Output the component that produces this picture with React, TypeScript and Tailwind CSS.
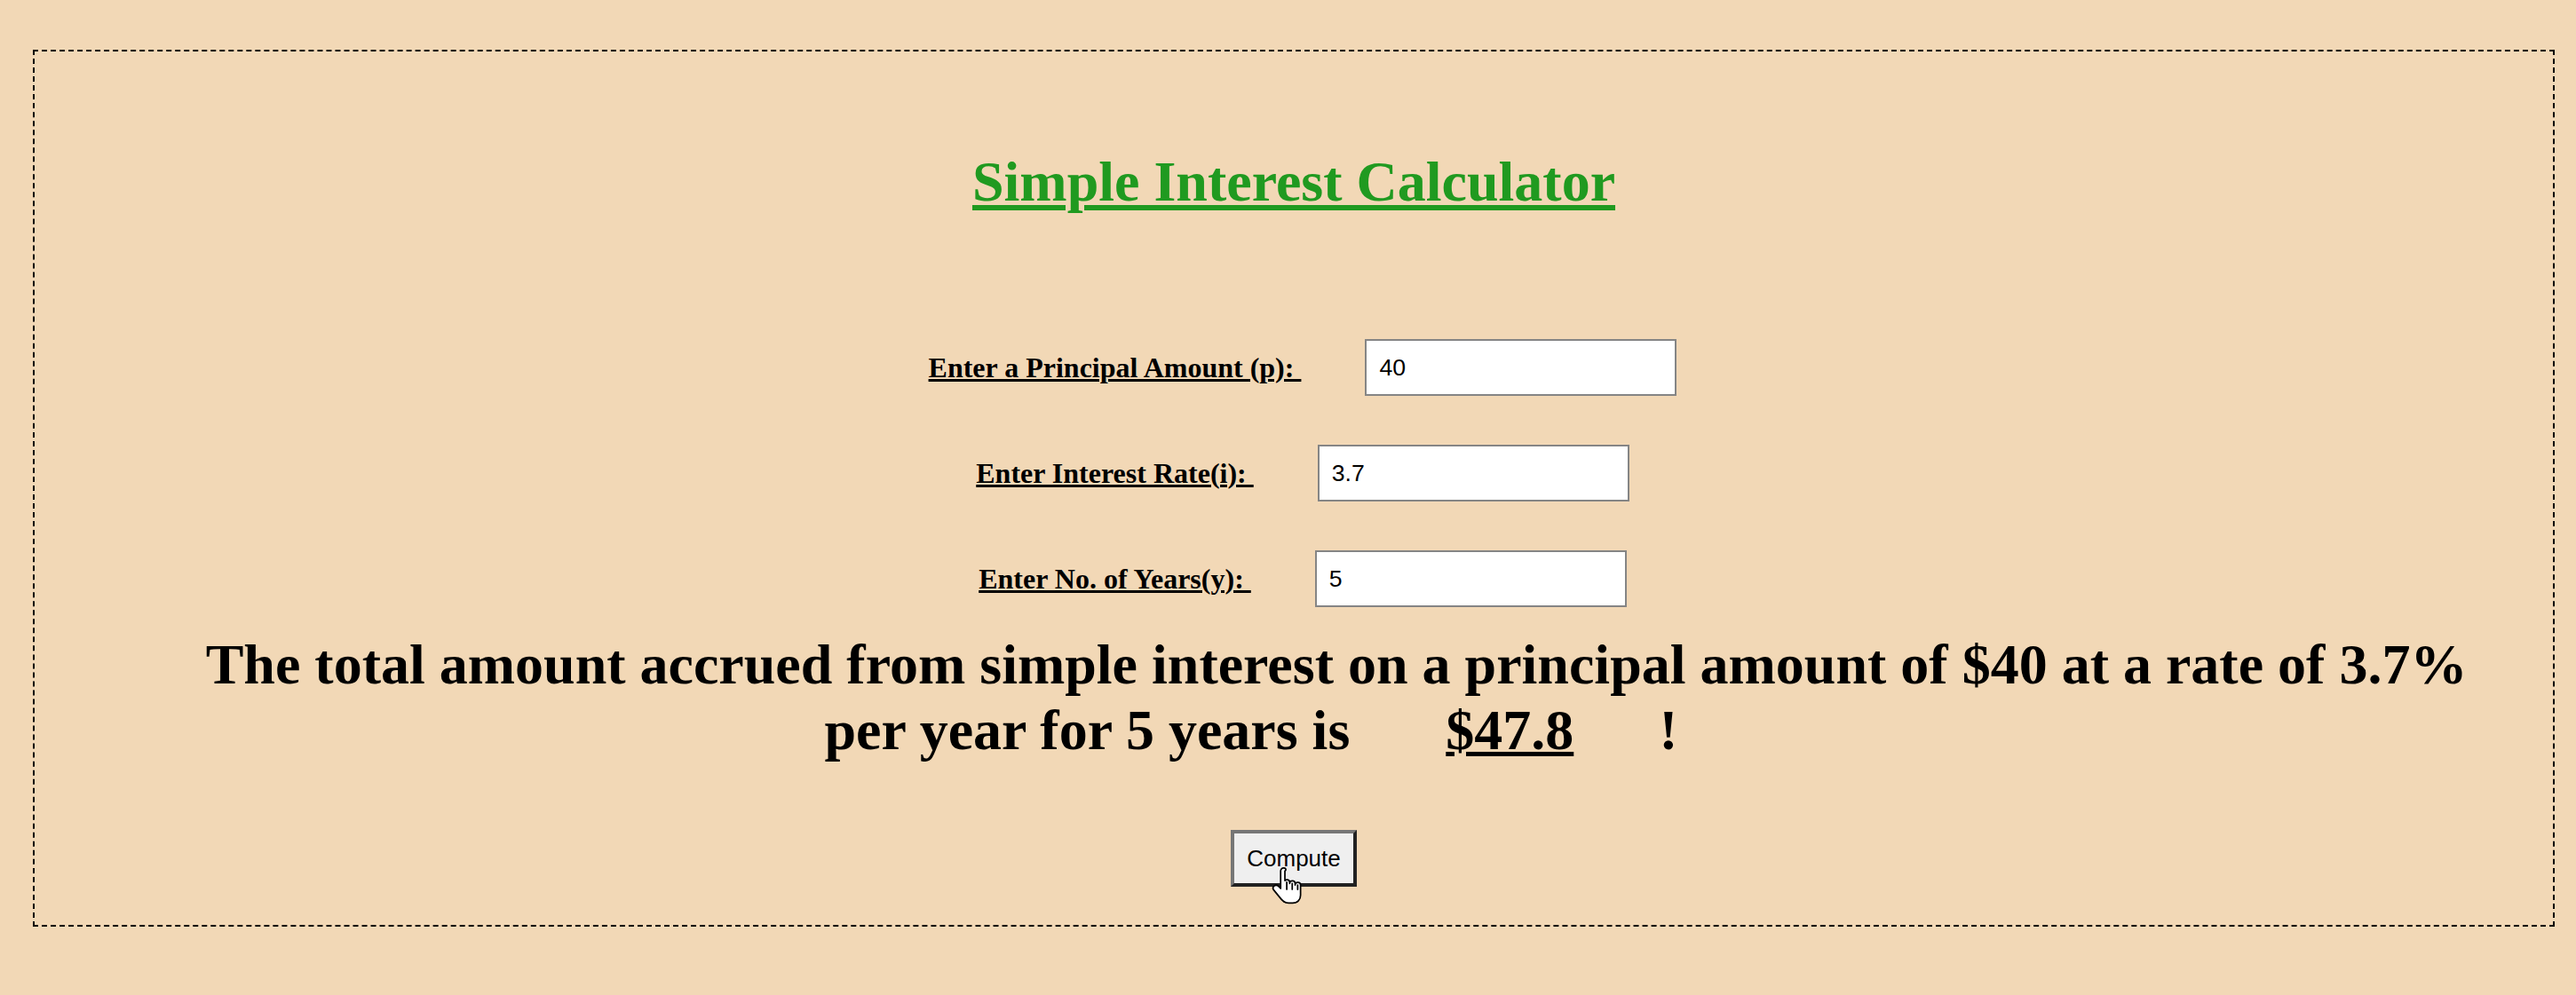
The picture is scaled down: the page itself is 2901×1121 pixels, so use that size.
import React from "react";

function HandCursor() {
  return (
    <svg
      viewBox="0 0 18 24"
      className="absolute left-[46px] top-[41px] h-[46px] w-[35px]"
    >
      <path
        d="M7 1c-1 0-1.8.8-1.8 1.8V13l-1.3-1.3c-.8-.8-2-.8-2.7 0-.6.6-.6 1.6 0 2.3l4.5 5.5c1 1.2 2.5 2.1 4.2 2.1h2.4c2.8 0 4.6-2 4.6-4.7V11c0-.9-.7-1.6-1.6-1.6s-1.6.7-1.6 1.6v-.9c0-.9-.7-1.6-1.6-1.6s-1.6.7-1.6 1.6v-.6c0-.9-.7-1.6-1.6-1.6-.5 0-.9.2-1.2.5V2.8C8.8 1.8 8 1 7 1z"
        fill="#ffffff"
        stroke="#000000"
        strokeWidth="0.9"
        strokeLinejoin="round"
      />
      <path d="M8.8 9.3v4.2M12 10.1v3.4M15.2 11v2.6" stroke="#000000" strokeWidth="0.9" strokeLinecap="round" />
    </svg>
  );
}

function Field({ label, value }: { label: string; value: string }) {
  return (
    <div className="flex items-center justify-center gap-[72px]">
      <label className="text-[32px] font-bold leading-[37px] underline decoration-[3px] underline-offset-[2px]">
        {label}
      </label>
      <input
        type="text"
        defaultValue={value}
        className="h-[64px] w-[351px] border-2 border-[#858585] bg-white pl-[14px] font-['Liberation_Sans',Arial,sans-serif] text-[26.67px] text-black outline-none"
      />
    </div>
  );
}

export default function App() {
  return (
    <div className="min-h-screen bg-[#f2d8b6] pb-[77px] pl-[37px] pr-[24px] pt-[56px] font-['Liberation_Serif','Times_New_Roman',serif] text-black">
      <div className="flex flex-col items-center border-2 border-dashed border-black pb-[43px] pt-[115px]">
        {/* Title */}
        <h1 className="text-[64px] font-bold leading-none text-[#209a20] underline decoration-[6px] underline-offset-[5px]">
          Simple Interest Calculator
        </h1>

        {/* Inputs */}
        <div className="mt-[145px] flex flex-col gap-[55px] pl-[20px]">
          <Field label={"Enter a Principal Amount (p):\u00a0"} value="40" />
          <Field label={"Enter Interest Rate(i):\u00a0"} value="3.7" />
          <Field label={"Enter No. of Years(y):\u00a0"} value="5" />
        </div>

        {/* Result */}
        <div className="mt-[28px] w-full text-center text-[64px] font-bold leading-[74px]">
          <div className="pl-[96px]">
            The total amount accrued from simple interest on a principal amount of $40 at a rate of 3.7%
          </div>
          <div className="pr-[96px]">
            per year for 5 years is
            <span className="ml-[108px] inline-block underline decoration-[5px] underline-offset-[3px]">$47.8</span>
            <span className="ml-[96px] inline-block">!</span>
          </div>
        </div>

        {/* Button */}
        <div className="relative mt-[75px]">
          <button className="h-[64px] w-[142px] border-4 border-b-[#222222] border-l-[#767676] border-r-[#222222] border-t-[#767676] bg-[#efefef] font-['Liberation_Sans',Arial,sans-serif] text-[26px] text-black">
            Compute
          </button>
          <HandCursor />
        </div>
      </div>
    </div>
  );
}
